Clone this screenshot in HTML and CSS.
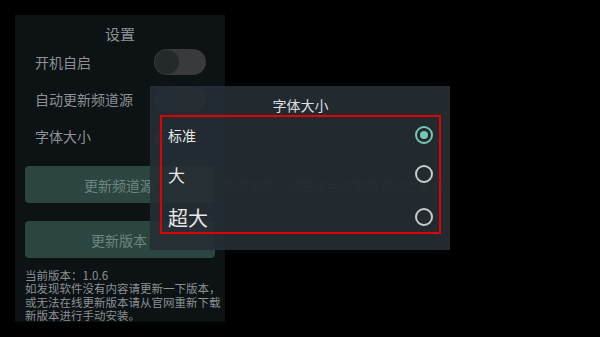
FILE: index.html
```html
<!DOCTYPE html>
<html lang="zh">
<head>
  <meta charset="UTF-8">
  <title>设置</title>
  <link rel="stylesheet" href="styles.css">
</head>
<body>
  <div class="settings">
    <h3>设置</h3>
    <div class="row">
      <span>开机自启</span>
      <div class="switch"><div class="knob"></div></div>
    </div>
    <div class="row">
      <span>自动更新频道源</span>
      <div class="switch"><div class="knob"></div></div>
    </div>
    <div class="row">
      <span>字体大小</span>
      <span class="value">标准</span>
    </div>
    <div class="btn">更新频道源</div>
    <div class="btn">更新版本</div>
    <div class="info">
      <div>当前版本：1.0.6</div>
      <div>如发现软件没有内容请更新一下版本，</div>
      <div>或无法在线更新版本请从官网重新下载</div>
      <div>新版本进行手动安装。</div>
    </div>
  </div>

  <div class="toast">获取频道列表失败，请尝试手动更新或退出重启</div>

  <div class="dialog">
    <div class="dialog-title">字体大小</div>
    <div class="options">
      <div class="option size-1"><span>标准</span><span class="radio checked"></span></div>
      <div class="option size-2"><span>大</span><span class="radio"></span></div>
      <div class="option size-3"><span>超大</span><span class="radio"></span></div>
    </div>
  </div>
</body>
</html>
```

FILE: styles.css
```css
html, body {
  margin: 0;
  background: #000;
  width: 600px;
  height: 337px;
  overflow: hidden;
}
body {
  font-family: "Noto Sans CJK SC", "Noto Sans", sans-serif;
  padding: 15px 0 0 15px;
  box-sizing: border-box;
  position: relative;
}
.settings {
  width: 210px;
  height: 307px;
  background: #0d1215;
  box-sizing: border-box;
  padding: 10px 10px 0 10px;
  color: #8c9194;
}
.settings h3 {
  margin: 0;
  font-weight: normal;
  font-size: 15px;
  text-align: center;
  line-height: 18px;
}
.row {
  display: flex;
  justify-content: space-between;
  align-items: center;
  height: 37px;
  padding: 0 9px 0 10px;
  font-size: 14px;
}
.switch {
  width: 52px;
  height: 26px;
  border-radius: 13px;
  background: #383a3b;
  position: relative;
}
.knob {
  position: absolute;
  left: 1px;
  top: 1px;
  width: 24px;
  height: 24px;
  border-radius: 50%;
  background: #222a2b;
}
.value {
  font-size: 14px;
  color: #4a4f52;
  margin-right: 24px;
}
.btn {
  margin-top: 12px;
  height: 37px;
  border-radius: 4px;
  background: #2b4540;
  color: #6f8580;
  font-size: 14px;
  display: flex;
  align-items: center;
  justify-content: center;
  padding-right: 2px;
}
.btn + .btn {
  margin-top: 18px;
}
.info {
  margin-top: 11px;
  font-size: 11.5px;
  line-height: 13.4px;
  color: #8c9194;
  white-space: nowrap;
}
.toast {
  position: absolute;
  left: 222px;
  top: 176px;
  width: 222px;
  overflow: hidden;
  white-space: nowrap;
  direction: rtl;
  font-size: 13px;
  color: #30373b;
}
.dialog {
  position: absolute;
  left: 150px;
  top: 86px;
  width: 300px;
  height: 164px;
  background: rgba(37, 45, 52, 0.93);
  box-sizing: border-box;
  padding: 9px 9px 0 10px;
}
.dialog-title {
  text-align: center;
  color: #dcdfe0;
  font-size: 14px;
  line-height: 20px;
}
.options {
  border: 2px solid #e00000;
  height: 119px;
  box-sizing: border-box;
  padding: 0 6px;
}
.option {
  display: flex;
  justify-content: space-between;
  align-items: center;
  color: #e6e8e8;
  box-sizing: border-box;
}
.size-1 { height: 36px; font-size: 14px; }
.size-2 { height: 42px; font-size: 17px; }
.size-3 { height: 37px; font-size: 20px; padding-top: 7px; }
.radio {
  width: 14px;
  height: 14px;
  border: 2px solid #c8cbcc;
  border-radius: 50%;
  position: relative;
}
.radio.checked {
  border-color: #76c7b5;
}
.radio.checked::after {
  content: "";
  position: absolute;
  left: 3px;
  top: 3px;
  width: 8px;
  height: 8px;
  border-radius: 50%;
  background: #76c7b5;
}
```
